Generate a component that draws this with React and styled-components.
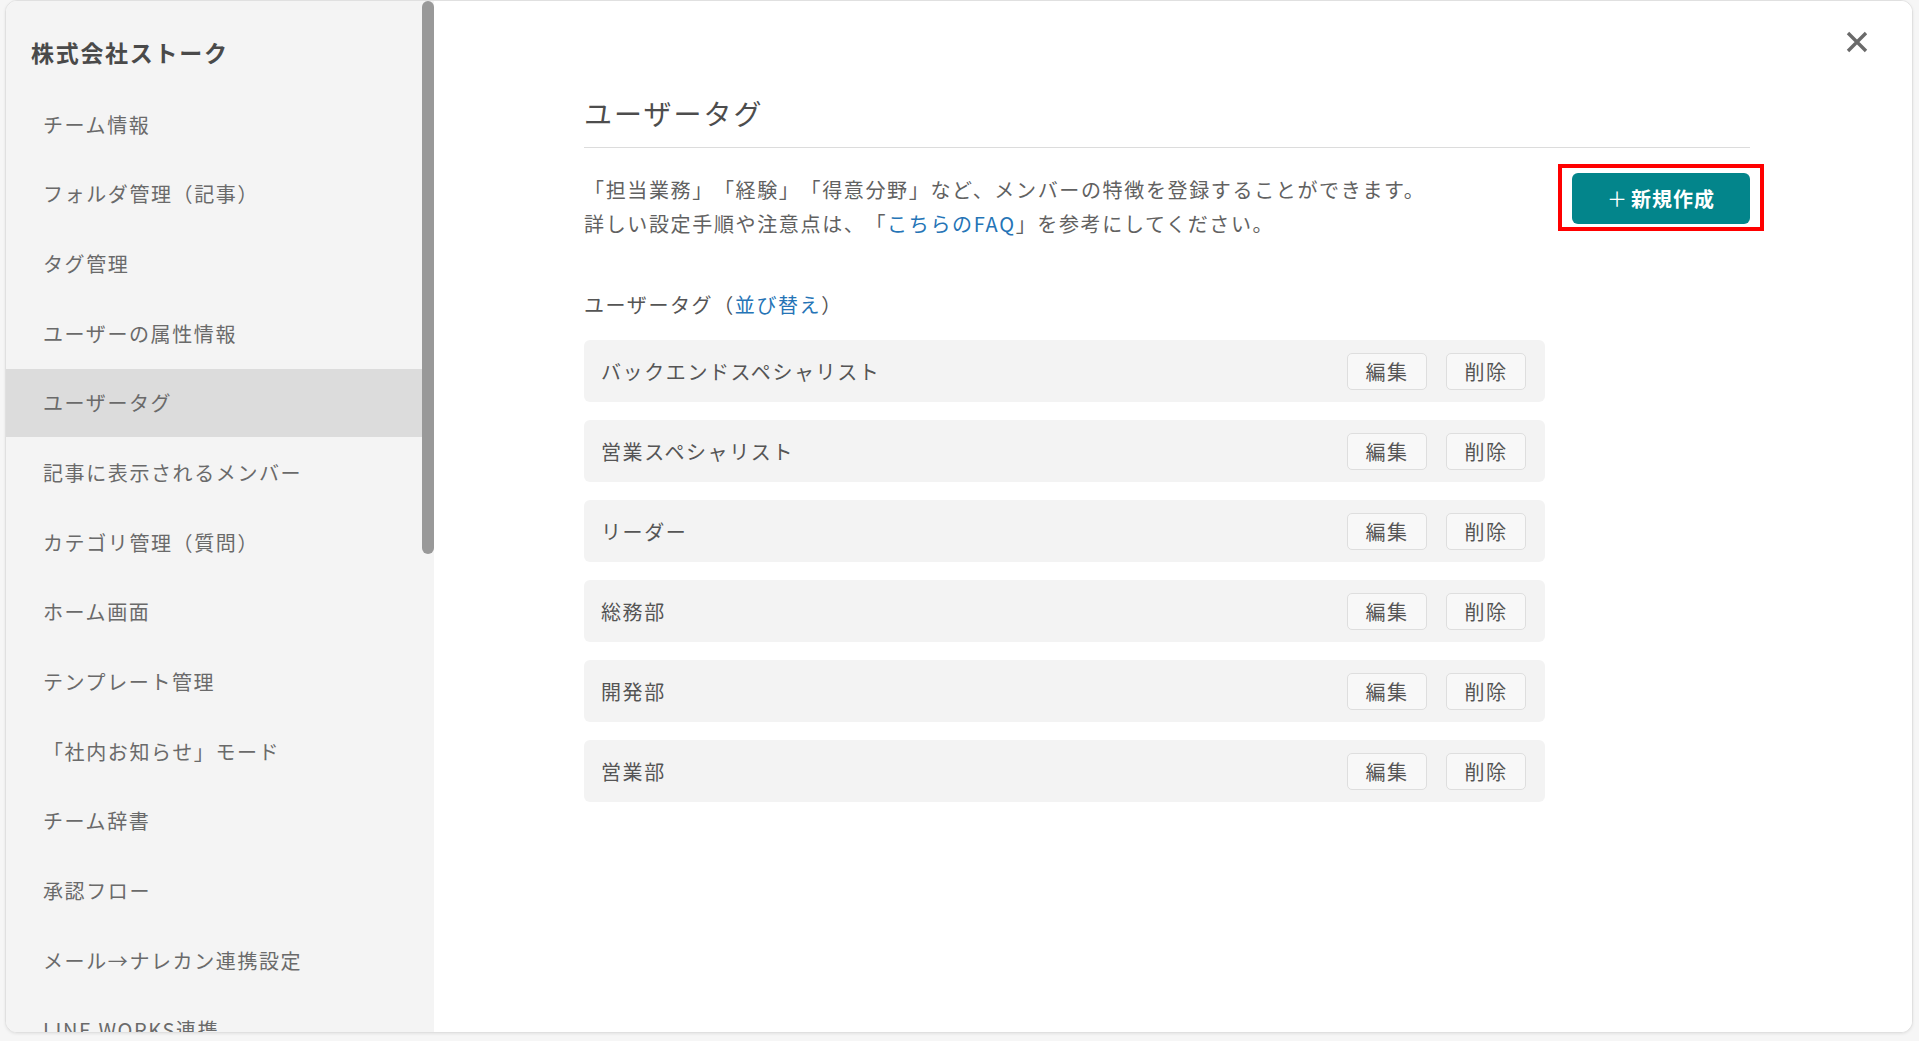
import styled, { createGlobalStyle } from 'styled-components';

const GlobalStyle = createGlobalStyle`
    html, body {
        margin: 0;
        padding: 0;
        background: #f6f6f6;
    }
    body {
        font-family: "Noto Sans CJK JP", "Noto Sans", sans-serif;
        color: #595959;
        text-spacing-trim: space-all;
    }
    * { box-sizing: border-box; }
`;

const menu = [
    'チーム情報',
    'フォルダ管理（記事）',
    'タグ管理',
    'ユーザーの属性情報',
    'ユーザータグ',
    '記事に表示されるメンバー',
    'カテゴリ管理（質問）',
    'ホーム画面',
    'テンプレート管理',
    '「社内お知らせ」モード',
    'チーム辞書',
    '承認フロー',
    'メール→ナレカン連携設定',
    'LINE WORKS連携',
];

const tags = [
    'バックエンドスペシャリスト',
    '営業スペシャリスト',
    'リーダー',
    '総務部',
    '開発部',
    '営業部',
];

const App = () => {
    return (
    <>
        <GlobalStyle />
        <Page>
            <Card>
                <Sidebar>
                    <Company>株式会社ストーク</Company>
                    <Menu>
                        {menu.map((m) => (
                            <MenuItem key={m} $active={m === 'ユーザータグ'}>{m}</MenuItem>
                        ))}
                    </Menu>
                    <ScrollThumb />
                </Sidebar>
                <Main>
                    <Close aria-label="close">
                        <svg width="22" height="22" viewBox="0 0 22 22">
                            <path d="M2 2 L20 20 M20 2 L2 20" stroke="#6a6a6a" strokeWidth="3.4" strokeLinecap="butt" fill="none" />
                        </svg>
                    </Close>
                    <Content>
                        <Title>ユーザータグ</Title>
                        <Intro>
                            <Description>
                                「担当業務」「経験」「得意分野」など、メンバーの特徴を登録することができます。<br />
                                詳しい設定手順や注意点は、「<Link>こちらのFAQ</Link>」を参考にしてください。
                            </Description>
                            <Highlight>
                                <CreateButton><Plus>＋</Plus>新規作成</CreateButton>
                            </Highlight>
                        </Intro>
                        <SubTitle>ユーザータグ（<Link>並び替え</Link>）</SubTitle>
                        <TagList>
                            {tags.map((t) => (
                                <TagRow key={t}>
                                    <TagName>{t}</TagName>
                                    <Actions>
                                        <SmallButton>編集</SmallButton>
                                        <SmallButton>削除</SmallButton>
                                    </Actions>
                                </TagRow>
                            ))}
                        </TagList>
                    </Content>
                </Main>
            </Card>
        </Page>
    </>
    )
}

const Page = styled.div`
    height: 1041px;
    padding: 0 6px 8px 5px;
    overflow: hidden;
`;

const Card = styled.div`
    display: flex;
    height: 1033px;
    background: #fff;
    border: 1px solid #e0e0e0;
    border-radius: 12px;
    box-shadow: 0 1px 3px rgba(0, 0, 0, 0.08);
    overflow: hidden;
`;

const Sidebar = styled.nav`
    position: relative;
    width: 428px;
    flex-shrink: 0;
    background: #f4f4f4;
    overflow: hidden;
`;

// scrollbar thumb drawn over the sidebar's right edge
const ScrollThumb = styled.div`
    position: absolute;
    top: 0;
    right: 0;
    width: 12px;
    height: 553px;
    border-radius: 6px;
    background: #999;
`;

const Company = styled.h1`
    margin: 0;
    padding: 35px 0 22px 25px;
    font-size: 23px;
    line-height: 32px;
    font-weight: 700;
    letter-spacing: 1.7px;
    color: #4a4a4a;
`;

const Menu = styled.ul`
    list-style: none;
    margin: 0 12px 0 0;
    padding: 0;
`;

const MenuItem = styled.li`
    height: 68px;
    margin-bottom: 1.7px;
    display: flex;
    align-items: center;
    padding-left: 37px;
    font-size: 20px;
    letter-spacing: 1.6px;
    color: #6a6a6a;
    white-space: nowrap;
    background: ${(p) => (p.$active ? '#dcdcdc' : 'transparent')};
`;

const Main = styled.main`
    flex: 1;
    position: relative;
    background: #fff;
`;

const Close = styled.button`
    position: absolute;
    top: 29px;
    right: 43px;
    width: 24px;
    height: 24px;
    padding: 1px;
    border: none;
    background: none;
    cursor: pointer;
`;

const Content = styled.div`
    width: 1166px;
    margin-left: 150px;
    padding-top: 92px;
`;

const Title = styled.h2`
    margin: 0;
    padding-bottom: 14px;
    border-bottom: 1px solid #dcdcdc;
    font-size: 28px;
    line-height: 40px;
    font-weight: 400;
    letter-spacing: 2px;
    color: #4d4d4d;
`;

const Intro = styled.div`
    display: flex;
    justify-content: space-between;
    align-items: flex-start;
    margin-top: 25px;
`;

const Description = styled.p`
    margin: 0;
    font-size: 20px;
    line-height: 34px;
    letter-spacing: 1.65px;
    color: #616161;
`;

const Link = styled.a`
    color: #2574b6;
    cursor: pointer;
`;

const Highlight = styled.div`
    margin: -9px -14px 0 0;
    padding: 5px 10px 3px;
    border: 4px solid #ff0000;
`;

const CreateButton = styled.button`
    display: block;
    width: 178px;
    height: 51px;
    border: none;
    border-radius: 6px;
    background: #03858b;
    color: #fff;
    font-family: inherit;
    font-size: 20px;
    font-weight: 700;
    letter-spacing: 1px;
    text-spacing-trim: space-all;
    cursor: pointer;
`;

const Plus = styled.span`
    font-weight: 400;
    margin-right: 3px;
`;

const SubTitle = styled.h3`
    margin: 47px 0 0;
    font-size: 20px;
    line-height: 34px;
    font-weight: 400;
    letter-spacing: 1.6px;
    color: #555;
`;

const TagList = styled.div`
    width: 961px;
    margin-top: 18px;
    display: flex;
    flex-direction: column;
    gap: 18px;
`;

const TagRow = styled.div`
    height: 62px;
    display: flex;
    align-items: center;
    justify-content: space-between;
    padding: 0 19px 0 17px;
    background: #f3f3f3;
    border-radius: 6px;
`;

const TagName = styled.span`
    font-size: 20px;
    letter-spacing: 1.6px;
    color: #555;
`;

const Actions = styled.div`
    display: flex;
    gap: 19px;
`;

const SmallButton = styled.button`
    width: 80px;
    height: 37px;
    padding: 0;
    border: 1px solid #dedede;
    border-radius: 5px;
    background: #f8f8f8;
    font-family: inherit;
    font-size: 20px;
    letter-spacing: 1.4px;
    color: #555;
    cursor: pointer;
`;

export default App
